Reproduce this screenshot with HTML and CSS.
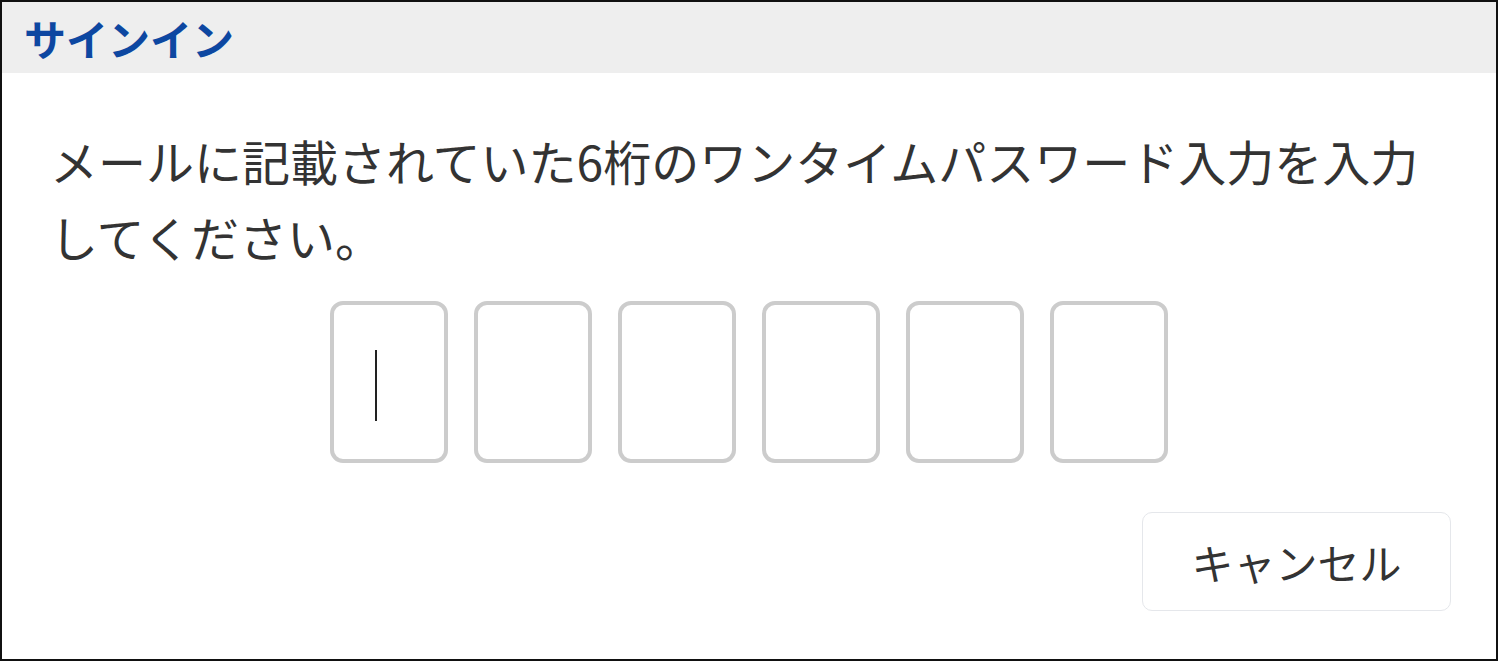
FILE: index.html
```html
<!DOCTYPE html>
<html lang="ja">
<head>
    <meta charset="UTF-8">
    <meta name="viewport" content="width=device-width, initial-scale=1.0">
    <title>サインイン</title>
    <link rel="stylesheet" href="styles.css">
</head>
<body>

    <div class="dialog">
        <div class="dialog-header">
            <h1 class="dialog-title">サインイン</h1>
        </div>

        <div class="dialog-body">
            <p class="message">メールに記載されていた6桁のワンタイムパスワード入力を入力してください。</p>

            <div class="code-inputs">
                <div class="code-box active"><span class="caret"></span></div>
                <div class="code-box"></div>
                <div class="code-box"></div>
                <div class="code-box"></div>
                <div class="code-box"></div>
                <div class="code-box"></div>
            </div>

            <div class="actions">
                <button class="cancel-btn" type="button">キャンセル</button>
            </div>
        </div>
    </div>

</body>
</html>
```

FILE: styles.css
```css
html, body {
    margin: 0;
    padding: 0;
    background: #fff;
}

body {
    font-family: "Noto Sans CJK JP", "Noto Sans", sans-serif;
    color: #333;
}

.dialog {
    box-sizing: border-box;
    width: 1498px;
    height: 661px;
    border: 2px solid #111;
    display: flex;
    flex-direction: column;
}

.dialog-header {
    height: 71px;
    background: #eeeeee;
    display: flex;
    align-items: center;
    padding-left: 22px;
}

.dialog-title {
    margin: 0;
    font-size: 42px;
    font-weight: bold;
    color: #0d47a1;
    line-height: 1;
}

.dialog-body {
    padding: 49px 45px 0 48px;
}

.message {
    margin: 0;
    font-size: 48px;
    line-height: 76px;
    color: #333;
}

.code-inputs {
    display: flex;
    justify-content: center;
    gap: 26px;
    margin-top: 27px;
    margin-left: -4px;
}

.code-box {
    box-sizing: border-box;
    width: 118px;
    height: 162px;
    border: 4px solid #cccccc;
    border-radius: 13px;
    display: flex;
    align-items: center;
    padding-left: 41px;
}

.caret {
    display: block;
    width: 2px;
    height: 71px;
    margin-top: 6px;
    background: #222;
}

.actions {
    display: flex;
    justify-content: flex-end;
    margin-top: 49px;
}

.cancel-btn {
    box-sizing: border-box;
    width: 309px;
    height: 99px;
    background: #fff;
    border: 1px solid #e5e7eb;
    border-radius: 10px;
    font-family: inherit;
    font-size: 42px;
    color: #333;
    cursor: pointer;
}
```
